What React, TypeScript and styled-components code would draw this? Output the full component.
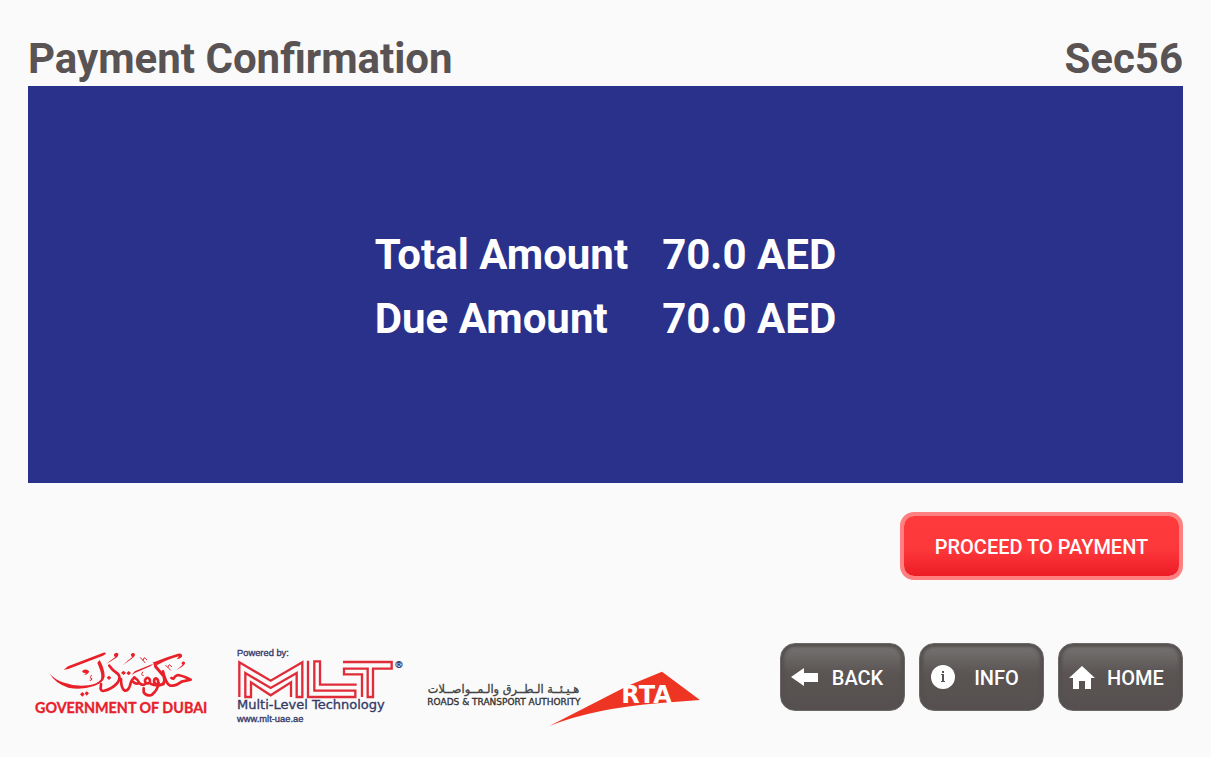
import React from "react";
import styled, { createGlobalStyle } from "styled-components";

const GlobalStyle = createGlobalStyle`
  * { box-sizing: border-box; }
  body { margin: 0; background: #fafafa; font-family: Roboto, sans-serif; }
`;

const Page = styled.div`
  min-height: 100vh;
  display: flex;
  flex-direction: column;
  padding: 34px 28px 29px;
`;

const Header = styled.header`
  display: flex;
  justify-content: space-between;
  align-items: center;
  padding-bottom: 2px;
  color: #595353;
`;

const Title = styled.h1`
  margin: 0;
  font-size: 42px;
  line-height: 50px;
  font-weight: 700;
`;

const Section = styled.p`
  margin: 0;
  font-size: 42px;
  line-height: 50px;
  font-weight: 700;
`;

const Panel = styled.main`
  flex: 1;
  display: flex;
  align-items: center;
  justify-content: center;
  padding-top: 5px;
  background: #2a318b;
  color: #fff;
`;

const Amounts = styled.dl`
  display: grid;
  grid-template-columns: auto auto;
  column-gap: 34px;
  margin: 0;
  font-size: 42px;
  line-height: 64px;
  font-weight: 700;
  dt, dd { margin: 0; }
`;

const Actions = styled.div`
  display: flex;
  justify-content: flex-end;
  padding: 29px 0 63px;
`;

const ProceedButton = styled.button`
  width: 283px;
  height: 68px;
  padding: 2px 0 0;
  border: 4px solid #ff8080;
  border-radius: 14px;
  background: linear-gradient(#ff3a3c 0%, #fd383a 55%, #ec1c26 100%) padding-box, #ff8080;
  color: #fff;
  font: 500 20px Roboto, sans-serif;
  cursor: pointer;
`;

const Footer = styled.footer`
  display: flex;
  justify-content: space-between;
  align-items: flex-start;
`;

const Logos = styled.div`
  display: flex;
  gap: 14px;
  svg { display: block; }
`;

const Nav = styled.nav`
  display: flex;
  gap: 14px;
`;

const NavButton = styled.button`
  width: 125px;
  height: 68px;
  display: flex;
  align-items: center;
  padding: 0 9px;
  border: 1px solid #6d6868;
  border-radius: 15px;
  background: linear-gradient(#767573 0%, #5a5453 45%, #565050 100%);
  box-shadow: inset 0 0 3px 3px #565050;
  color: #fff;
  font: 500 20px Roboto, sans-serif;
  cursor: pointer;
  svg { flex: none; display: block; }
`;

const NavLabel = styled.span`
  flex: 1;
  padding-top: 2px;
  text-align: center;
`;

const DubaiLogo = () => (
  <svg width="186" height="85" viewBox="24 9 558 255" role="img" aria-label="Government of Dubai">
    <g fill="#e8202a">
      <path d="M131 89L144 79L250 38Q260 36 257 42L249 47L145 87Z" />
      <path d="M88 100Q103 118 128 127Q166 141 205 136Q233 131 242 119Q247 107 239 86L232 68L239 60Q254 86 254 110Q250 128 222 138Q184 151 145 143Q108 133 88 100Z" />
      <path d="M186 94Q192 86 200 89Q209 92 207 97Q202 104 191 106Q196 101 198 98Q189 101 186 94Z" />
      <path d="M180 163L187 156L194 163L187 170ZM194 160L200 154L207 160L200 167Z" />
      <path d="M282 43Q288 34 295 41Q297 49 283 57L258 73Q270 62 286 51Q280 49 282 43Z" />
      <path d="M333 43Q338 35 345 42Q346 49 333 58L308 76Q321 63 337 51Q332 49 333 43Z" />
      <path d="M485 68Q489 61 495 67Q496 74 486 80L468 91Q479 82 488 74Q484 73 485 68Z" />
      <path d="M260 113L267 107L274 113L267 120Z" />
      <path d="M303 99L310 92L318 98L311 105ZM319 100L326 93L333 99L326 106Z" />
      <path d="M397 68L405 65Q442 50 474 41Q488 39 486 50Q480 57 470 58L477 49Q440 59 412 75Z" />
      <path d="M335 105L344 94L392 74L400 72L391 79L346 98Z" />
    </g>
    <g fill="none" stroke="#e8202a" strokeLinecap="round" strokeLinejoin="round">
      <path strokeWidth="8" d="M268 77Q278 92 294 102Q304 112 292 129Q275 148 250 153Q243 153 242 146L243 132" />
      <path strokeWidth="8" d="M303 117Q303 145 314 152Q325 153 330 136Q334 119 343 113" />
      <path strokeWidth="8" d="M343 112Q352 117 358 129Q348 134 340 126M358 129Q369 139 377 131M377 117Q382 109 389 118Q393 132 380 130Q371 125 377 117" />
      <path strokeWidth="8" d="M393 132Q402 136 413 136M404 117Q410 112 414 121Q416 133 407 133Q399 126 404 117M416 128Q413 151 396 164Q380 171 371 157L371 145" />
      <path strokeWidth="9" d="M405 71L407 80L431 108Q437 120 430 132L416 136" />
      <path strokeWidth="8" d="M429 94Q437 129 449 136Q466 140 485 125L512 119Q487 106 473 105Q466 107 460 116L454 114" />
      <path strokeWidth="3" d="M214 106Q207 116 216 116Q214 124 210 121M361 53L369 61L373 53L380 59M369 61L375 68M368 96Q361 106 370 107M437 76L443 82L448 74L455 80M444 82L451 90" />
    </g>
    <text x="45" y="219" fill="#e8202a" stroke="#e8202a" strokeWidth="1" fontFamily="Lato, sans-serif" fontWeight="700" fontSize="43">GOVERNMENT OF DUBAI</text>
  </svg>
);

const MltLogo = () => (
  <svg width="180" height="85" viewBox="9 9 540 255" role="img" aria-label="MLT Multi-Level Technology">
    <g fill="#343966" stroke="#343966" strokeWidth="1">
      <text x="36" y="49" fontFamily="'Liberation Sans', sans-serif" fontSize="28">Powered by:</text>
      <text x="36" y="207" fontFamily="'DejaVu Sans', sans-serif" fontSize="39">Multi-Level Technology</text>
      <text x="36" y="245" fontFamily="'Liberation Sans', sans-serif" fontSize="28">www.mlt-uae.ae</text>
      <text x="508" y="84" fontFamily="'DejaVu Sans', sans-serif" fontSize="28">®</text>
    </g>
    <g fill="none" stroke="#e02c38" strokeWidth="7">
      <path d="M43 171V67L137 122L232 67V171H215V99L137 144L61 99V171H78V127L137 166L198 127V171" />
      <path d="M249 62V171H391V152H268V64H285V134H395" />
      <path d="M354 66H500V86H444V171H428V86H357V103H411V171" />
    </g>
  </svg>
);

const RtaLogo = () => (
  <svg width="282" height="85" viewBox="6 -51 846 255" role="img" aria-label="Roads and Transport Authority">
    <path d="M388 198L622 78L726 35L840 120L722 129Q520 145 388 198Z" fill="#ee3524" />
    <text x="604" y="128" fill="#fff" fontFamily="'DejaVu Sans', sans-serif" fontWeight="700" fontSize="72">RTA</text>
    <text x="478" y="99" direction="rtl" fill="#444" stroke="#444" strokeWidth="1" fontFamily="'DejaVu Sans', sans-serif" fontSize="34">هـيـئــة الـطــرق والـمــواصــلات</text>
    <text x="22" y="134" fill="#333" stroke="#333" strokeWidth="1" fontFamily="'DejaVu Sans', sans-serif" fontSize="27">ROADS &amp; TRANSPORT AUTHORITY</text>
  </svg>
);

const BackIcon = () => (
  <svg width="30" height="30" viewBox="0 0 30 30" fill="#fff" aria-hidden="true">
    <path d="M1 15L14 6V11H28V20H14V24Z" />
  </svg>
);

const InfoIcon = () => (
  <svg width="30" height="30" viewBox="0 0 30 30" aria-hidden="true">
    <circle cx="14" cy="15" r="12" fill="#fff" />
    <path d="M12 12H15V19H16V20H12V19H13V13H12ZM13 9H15V11H13Z" fill="#595353" />
  </svg>
);

const HomeIcon = () => (
  <svg width="30" height="30" viewBox="0 0 30 30" fill="#fff" aria-hidden="true">
    <path d="M1 16L14 4L27 16H23V27H17V19H11V27H5V16Z" />
  </svg>
);

export default function App() {
  return (
    <>
      <GlobalStyle />
      <Page>
        <Header>
          <Title>Payment Confirmation</Title>
          <Section>Sec56</Section>
        </Header>
        <Panel>
          <Amounts>
            <dt>Total Amount</dt>
            <dd>70.0 AED</dd>
            <dt>Due Amount</dt>
            <dd>70.0 AED</dd>
          </Amounts>
        </Panel>
        <Actions>
          <ProceedButton type="button">PROCEED TO PAYMENT</ProceedButton>
        </Actions>
        <Footer>
          <Logos>
            <DubaiLogo />
            <MltLogo />
            <RtaLogo />
          </Logos>
          <Nav aria-label="Kiosk navigation">
            <NavButton type="button"><BackIcon /><NavLabel>BACK</NavLabel></NavButton>
            <NavButton type="button"><InfoIcon /><NavLabel>INFO</NavLabel></NavButton>
            <NavButton type="button"><HomeIcon /><NavLabel>HOME</NavLabel></NavButton>
          </Nav>
        </Footer>
      </Page>
    </>
  );
}
